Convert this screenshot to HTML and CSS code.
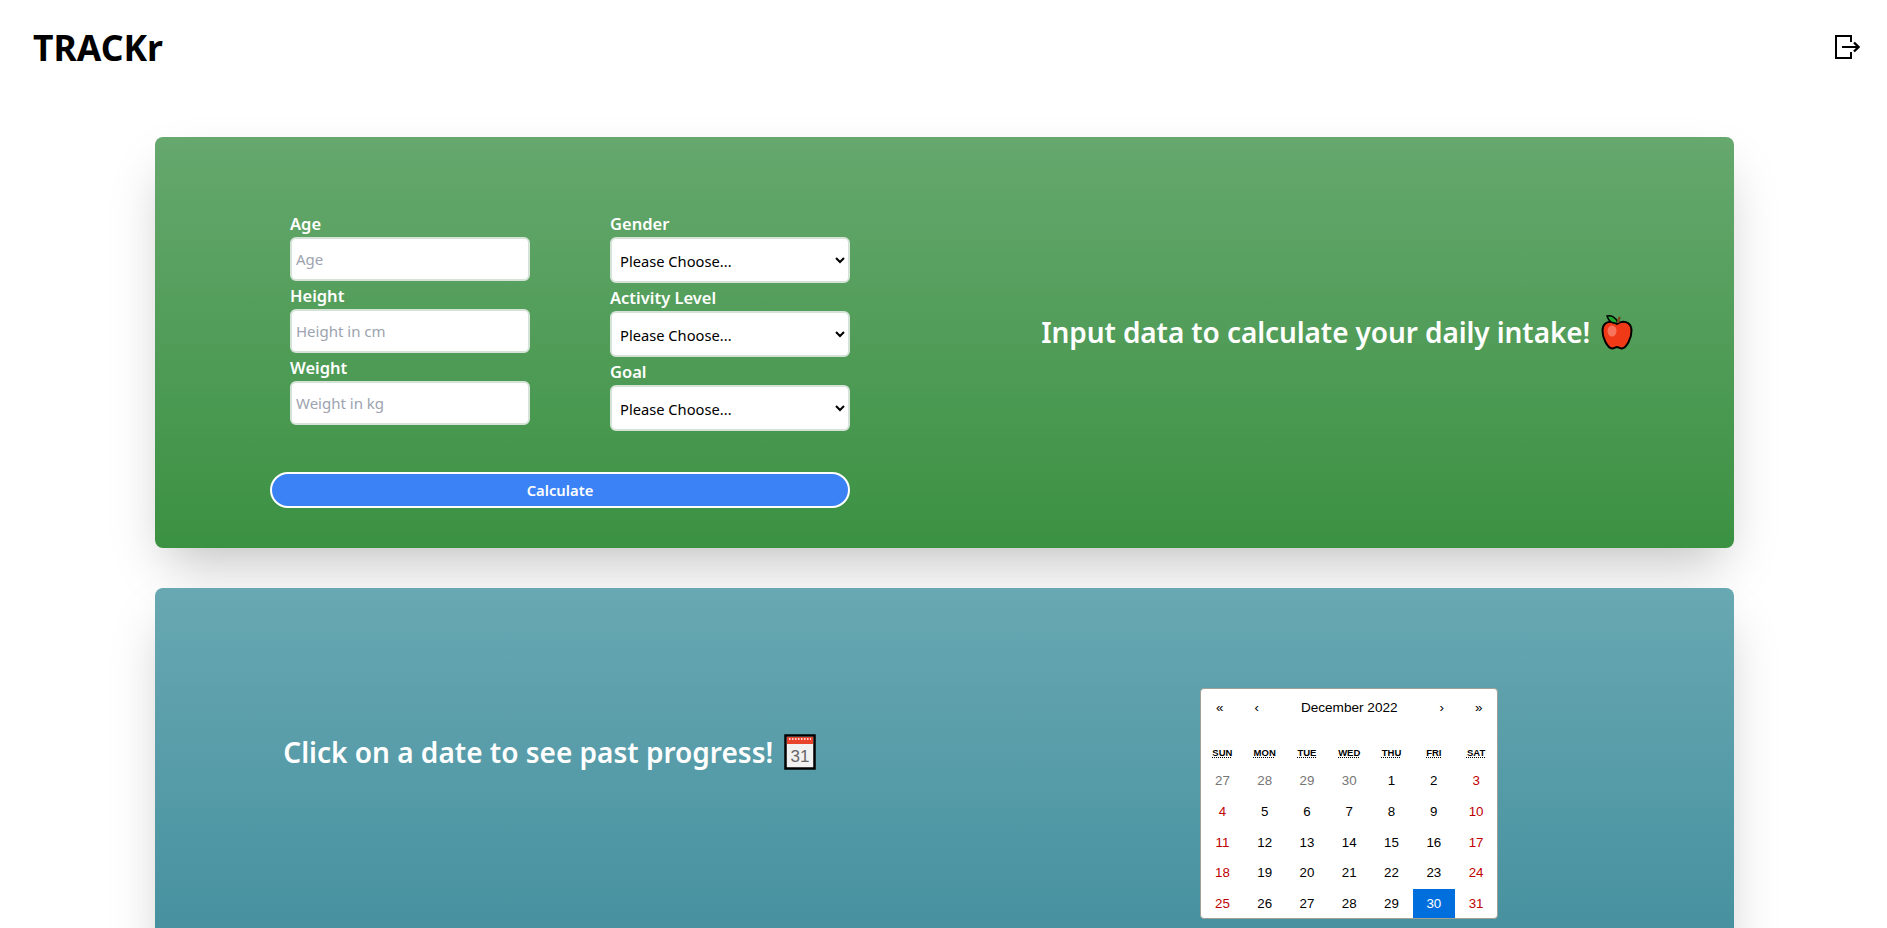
FILE: index.html
```html
<!DOCTYPE html>
<html lang="en">
<head>
  <meta charset="UTF-8" />
  <meta name="viewport" content="width=device-width, initial-scale=1.0" />
  <title>TRACKr</title>
  <link rel="stylesheet" href="styles.css">
</head>
<body>
  <header class="topbar">
    <h1 class="logo">TRACKr</h1>
    <button class="logout" aria-label="Logout">
      <svg width="26" height="26" viewBox="0 0 26 26" fill="none" stroke="#000" stroke-width="2">
        <path d="M17 8V2H2v22h15v-6" />
        <path d="M8 13h16" />
        <path d="M20 8.500l4.500 4.500-4.500 4.500" stroke-width="2.400" />
      </svg>
    </button>
  </header>

  <main class="container">
    <section class="card card-green">
      <form class="intake-form">
        <div class="form-columns">
          <div class="form-col">
            <label class="field-label">Age</label>
            <input class="field-input" type="text" placeholder="Age">
            <label class="field-label">Height</label>
            <input class="field-input" type="text" placeholder="Height in cm">
            <label class="field-label">Weight</label>
            <input class="field-input" type="text" placeholder="Weight in kg">
          </div>
          <div class="form-col">
            <label class="field-label">Gender</label>
            <select class="field-select"><option>Please Choose...</option></select>
            <label class="field-label">Activity Level</label>
            <select class="field-select"><option>Please Choose...</option></select>
            <label class="field-label">Goal</label>
            <select class="field-select"><option>Please Choose...</option></select>
          </div>
        </div>
        <button class="calc-btn" type="button">Calculate</button>
      </form>
      <div class="card-message card-message-raised">
        <h2 class="message">Input data to calculate your daily intake!
          <svg class="emoji" width="32" height="36" viewBox="0 0 32 36">
            <path d="M16 10C11 6 2 7 1.500 16c-.3 8 5 18 9.500 18.500 2 .2 3.500-1.500 5-1.500s3 1.700 5 1.500c4.500-.5 9.800-10.500 9.500-18.500C30 7 21 6 16 10z" fill="#f03a17" stroke="#000" stroke-width="2" />
            <ellipse cx="11" cy="17" rx="4.500" ry="5.500" fill="#f8735c" />
            <path d="M6 2c4-1 9 1 11 7C12 10 8 8 6 2z" fill="#1fa830" stroke="#000" stroke-width="1.500" />
            <path d="M17 9c0-2 .5-4 2-6" fill="none" stroke="#7a4a1c" stroke-width="2.500" />
          </svg>
        </h2>
      </div>
    </section>

    <section class="card card-teal">
      <div class="card-message card-message-top">
        <h2 class="message message-wide">Click on a date to see past progress!
          <svg class="emoji" width="32" height="36" viewBox="0 0 32 36">
            <rect x="1.500" y="1.500" width="29" height="33" fill="#f1f1f1" stroke="#000" stroke-width="2.500" />
            <rect x="3" y="3" width="26" height="7" fill="#e8432d" />
            <path d="M5 5h22" stroke="#fff" stroke-width="1.500" stroke-dasharray="1.500 1.500" />
            <text x="16" y="28" text-anchor="middle" class="emoji-date">31</text>
          </svg>
        </h2>
      </div>
      <div class="card-calendar">
        <div class="calendar">
          <div class="cal-nav">
            <span class="cal-arrow">«</span>
            <span class="cal-arrow">‹</span>
            <span class="cal-label">December 2022</span>
            <span class="cal-arrow">›</span>
            <span class="cal-arrow">»</span>
          </div>
          <div class="cal-weekdays">
            <abbr>SUN</abbr><abbr>MON</abbr><abbr>TUE</abbr><abbr>WED</abbr><abbr>THU</abbr><abbr>FRI</abbr><abbr>SAT</abbr>
          </div>
          <div class="cal-days">
            <span class="muted">27</span><span class="muted">28</span><span class="muted">29</span><span class="muted">30</span><span>1</span><span>2</span><span class="weekend">3</span>
            <span class="weekend">4</span><span>5</span><span>6</span><span>7</span><span>8</span><span>9</span><span class="weekend">10</span>
            <span class="weekend">11</span><span>12</span><span>13</span><span>14</span><span>15</span><span>16</span><span class="weekend">17</span>
            <span class="weekend">18</span><span>19</span><span>20</span><span>21</span><span>22</span><span>23</span><span class="weekend">24</span>
            <span class="weekend">25</span><span>26</span><span>27</span><span>28</span><span>29</span><span class="selected">30</span><span class="weekend">31</span>
          </div>
        </div>
      </div>
    </section>
  </main>
</body>
</html>
```

FILE: styles.css
```css
html, body {
  height: 928px;
  overflow: hidden;
}

body {
  margin: 0;
  font-family: "Noto Sans", "Open Sans", sans-serif;
  background-color: #fff;
  color: #000;
}

.topbar {
  display: flex;
  justify-content: space-between;
  align-items: center;
  height: 94px;
  padding: 0 27px 0 33px;
  box-sizing: border-box;
}

.logo {
  margin: 0;
  font-size: 35.500px;
  font-weight: 700;
}

.logout {
  display: flex;
  padding: 0;
  background: none;
  border: none;
  cursor: pointer;
}

.container {
  display: flex;
  flex-direction: column;
  gap: 40px;
  width: 1579px;
  margin: 43px 0 0 155px;
}

.card {
  display: grid;
  grid-template-columns: 1fr 1fr;
  border-radius: 8px;
  box-shadow: 0 25px 50px -12px rgba(0, 0, 0, 0.25);
  color: #fff;
}

.card-green {
  height: 411px;
  background: linear-gradient(to top, #3b9142, #66a86e);
}

.card-teal {
  height: 371px;
  background: linear-gradient(to top, #448f9e, #68a8b2);
}

.intake-form {
  width: 580px;
  padding: 72px 0 0 115px;
}

.form-columns {
  display: flex;
  gap: 80px;
  padding-left: 20px;
}

.form-col {
  display: flex;
  flex-direction: column;
  width: 240px;
}

.field-label {
  height: 28px;
  font-size: 16.500px;
  font-weight: 600;
  line-height: 30px;
}

.field-input,
.field-select {
  box-sizing: border-box;
  width: 100%;
  border: 2px solid #d5e2d8;
  border-radius: 6px;
  background-color: #fff;
  font-family: inherit;
}

.field-input {
  height: 44px;
  padding: 0 4px;
  font-size: 15px;
}

.field-input::placeholder {
  color: #9ca3af;
}

.field-select {
  height: 46px;
  padding: 2px 4px 0;
  font-size: 14.700px;
  color: #000;
}

.calc-btn {
  display: block;
  width: 580px;
  height: 36px;
  margin-top: 41px;
  border: 2px solid #fff;
  border-radius: 18px;
  background-color: #3b82f6;
  color: #fff;
  font-family: inherit;
  font-size: 14.800px;
  font-weight: 600;
  cursor: pointer;
}

.card-message {
  display: flex;
  justify-content: center;
  align-items: center;
}

.card-message-raised {
  padding: 0 4px 22px 0;
}

.card-message-top {
  align-items: flex-start;
  padding-top: 144px;
}

.message {
  display: flex;
  align-items: center;
  gap: 11px;
  margin: 0;
  font-size: 28px;
  font-weight: 600;
  line-height: 40px;
  letter-spacing: -0.1px;
}

.message-wide {
  letter-spacing: 0;
}

.emoji {
  flex: none;
}

.emoji-date {
  font-family: "Liberation Sans", sans-serif;
  font-size: 17px;
  font-weight: 400;
  fill: #666;
}

.card-calendar {
  display: flex;
  justify-content: center;
  padding: 100px 0 0 20px;
}

.calendar {
  box-sizing: border-box;
  width: 298px;
  height: 231px;
  overflow: hidden;
  border: 1px solid #a0a096;
  border-radius: 4px;
  background-color: #fff;
  color: #000;
  font-family: "Liberation Sans", Arial, sans-serif;
  font-size: 13.330px;
}

.cal-nav {
  display: flex;
  align-items: center;
  height: 36px;
  margin-bottom: 16px;
}

.cal-arrow {
  width: 37px;
  text-align: center;
}

.cal-label {
  flex: 1;
  text-align: center;
  font-size: 13.600px;
}

.cal-weekdays {
  display: grid;
  grid-template-columns: repeat(7, 1fr);
  box-sizing: border-box;
  height: 25px;
  padding-bottom: 3px;
  align-items: center;
  text-align: center;
  font-size: 9.500px;
  font-weight: 700;
}

.cal-weekdays abbr {
  text-decoration: underline dotted;
}

.cal-days {
  display: grid;
  grid-template-columns: repeat(7, 1fr);
  grid-auto-rows: 30.800px;
  text-align: center;
  line-height: 30.800px;
}

.muted {
  color: #757575;
}

.weekend {
  color: #c00000;
}

.selected {
  background-color: #006edc;
  color: #fff;
}
```
